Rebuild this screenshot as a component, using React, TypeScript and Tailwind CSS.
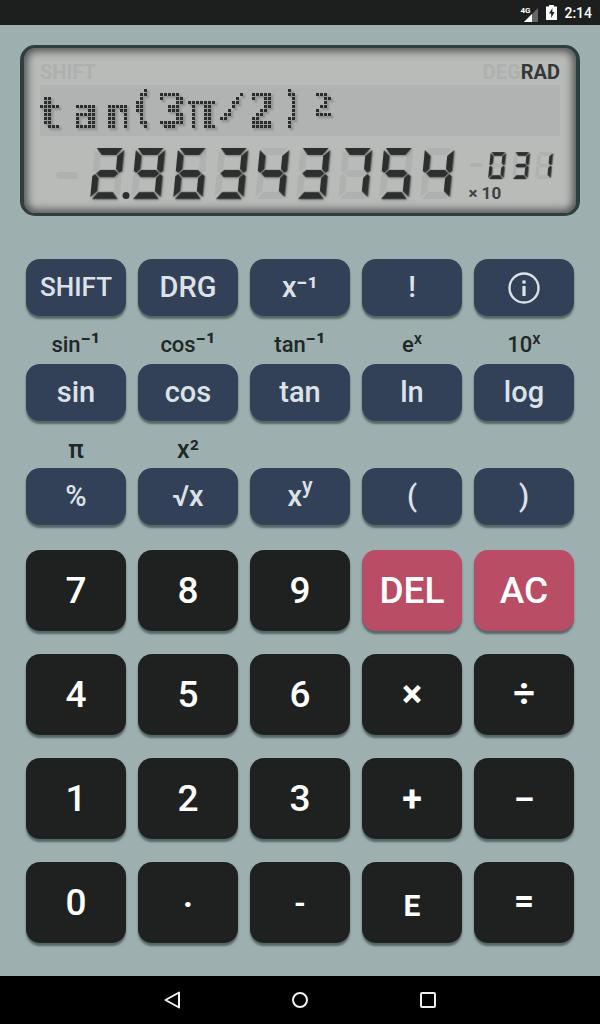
import { FC, ReactNode } from "react";

// seven segment shapes, unskewed, in a 32x51 box
const SEGMENTS: Record<string, string> = {
  a: "2,0 30,0 24,7 8,7",
  b: "32,2 32,23 29,25 25,21 25,8",
  c: "32,28 32,49 25,43 25,30 29,26",
  d: "8,44 24,44 30,51 2,51",
  e: "0,28 3,26 7,30 7,43 0,49",
  f: "0,2 7,8 7,21 3,25 0,23",
  g: "8,22 24,22 28,25.5 24,29 8,29 4,25.5",
};

const DIGITS: Record<string, string> = {
  "0": "abcdef",
  "1": "bc",
  "2": "abdeg",
  "3": "abcdg",
  "4": "bcfg",
  "5": "acdfg",
  "6": "acdefg",
  "7": "abc",
  "8": "abcdefg",
  "9": "abcdfg",
  " ": "",
};

// glyphs of the dot matrix line, each with its own slot and size
const EXPRESSION = [
  { c: "t", cls: "w-[20px] text-[44px] leading-[56px]" },
  { c: "a", cls: "w-[50px] text-[44px] leading-[56px]" },
  { c: "n", cls: "w-[16px] text-[44px] leading-[56px]" },
  { c: "(", cls: "w-[32px] text-[44px] leading-[44px]" },
  { c: "3", cls: "w-[28px] text-[48px] leading-[51px]" },
  { c: "π", cls: "w-[30px] text-[48px] leading-[51px]" },
  { c: "/", cls: "w-[34px] text-[30px] leading-[41px] scale-x-[1.6]" },
  { c: "2", cls: "w-[24px] text-[48px] leading-[51px]" },
  { c: ")", cls: "w-[36px] text-[44px] leading-[44px]" },
  { c: "2", cls: "w-[26px] text-[32px] leading-[40px]" },
];

const SegmentDigit: FC<{ value: string; small?: boolean; dot?: boolean }> = ({
  value,
  small,
  dot,
}) => {
  const lit = DIGITS[value];
  return (
    <svg
      viewBox="0 0 38 51"
      className={small ? "w-[20px] h-[27px] overflow-visible" : "w-[38px] h-[51px] overflow-visible"}
      aria-hidden="true"
    >
      <g transform="translate(5 0) skewX(-5.5) scale(0.92 1)">
        {Object.keys(SEGMENTS).map((k) => (
          <polygon key={k} points={SEGMENTS[k]} fill="#aeb1af" />
        ))}
        <g className="drop-shadow-[1.5px_1.5px_1px_rgba(0,0,0,0.3)]">
          {Object.keys(SEGMENTS)
            .filter((k) => lit.includes(k))
            .map((k) => (
              <polygon key={k} points={SEGMENTS[k]} fill="#2d2f2f" />
            ))}
        </g>
      </g>
      {dot && <circle cx="36" cy="47.5" r="3.5" fill="#2d2f2f" />}
    </svg>
  );
};

type KeyKind = "fn" | "num" | "del";

const KEY_COLORS: Record<KeyKind, string> = {
  fn: "h-[57px] bg-[#334158] text-[#dde2e8]",
  num: "h-[81px] bg-[#1f2120] text-white",
  del: "h-[81px] bg-[#b84d65] text-white",
};

const Key: FC<{ kind: KeyKind; children: ReactNode; text?: string }> = ({ kind, children, text }) => {
  const fallback = kind === "fn" ? "text-[29px] font-medium" : "text-[37px] font-medium";
  return (
    <div
      className={`${KEY_COLORS[kind]} ${text ?? fallback} flex items-center justify-center rounded-[14px] shadow-[0_3px_2px_rgba(55,75,75,0.7)]`}
    >
      {children}
    </div>
  );
};

const FnLabel: FC<{ children?: ReactNode; big?: boolean }> = ({ children, big }) => (
  <div className={`text-center font-medium text-[#1f2827] leading-[26px] ${big ? "text-[25px]" : "text-[22px]"}`}>
    {children}
  </div>
);

const InverseMark = () => <span className="text-[27px] leading-[0]">⁻¹</span>;

const Grid: FC<{ children: ReactNode; className?: string }> = ({ children, className }) => (
  <div className={`grid grid-cols-5 gap-x-3 ${className ?? ""}`}>{children}</div>
);

const InfoIcon = () => (
  <svg width="32" height="32" viewBox="0 0 32 32" fill="none">
    <circle cx="16" cy="16" r="14.5" stroke="#dde2e8" strokeWidth="2.4" />
    <rect x="14.4" y="14" width="3.2" height="10" fill="#dde2e8" />
    <rect x="14.4" y="8.4" width="3.2" height="3.2" fill="#dde2e8" />
  </svg>
);

const App: FC = () => {
  const mantissa = "296343754".split("");
  const exponent = ["0", "3", "1"];

  return (
    <div className="w-[600px] h-[1024px] flex flex-col bg-[#9dafae] font-['Roboto',sans-serif] overflow-hidden">
      {/* Status bar */}
      <div className="h-[25px] bg-[#1d1f1e] flex items-center justify-end pr-2 text-white">
        <div className="relative w-[20px] h-[20px] mr-[6px]">
          <svg width="20" height="20" viewBox="0 0 20 20">
            <polygon points="18,5 18,19 4,19" fill="#666" />
            <polygon points="12,11 12,19 4,19" fill="#fff" />
          </svg>
          <span className="absolute left-0 top-[4px] text-[8px] leading-[8px] font-bold">4G</span>
        </div>
        <svg width="11" height="15" viewBox="0 0 11 15" className="mr-[7px]">
          <path fillRule="evenodd" fill="#fff" d="M3 0h5v1.5h3V15H0V1.5h3zM6.5 3L3 8.5h2.2V13l3.3-6H6.3z" />
        </svg>
        <span className="text-[14px] font-medium leading-none">2:14</span>
      </div>

      {/* Main */}
      <div className="flex-1 flex flex-col">
        {/* LCD */}
        <div className="mt-5 mx-5 h-[171px] rounded-[15px] border-y-[3px] border-x-4 border-[#2f3e3f] bg-[#b9bbb9] shadow-[inset_0_0_8px_3px_rgba(30,30,30,0.7)] flex flex-col px-4 pt-[14px]">
          <div className="h-[22px] flex items-start justify-between text-[20px] font-bold leading-[20px] text-[#adb0ae]">
            <span>SHIFT</span>
            <span>
              DEG<span className="text-[#333838]">RAD</span>
            </span>
          </div>
          <div className="mt-px h-[51px] bg-[#b0b3b1] flex items-start">
            <svg className="w-0 h-0" aria-hidden="true">
              <filter id="dots" x="0" y="0" width="100%" height="100%" colorInterpolationFilters="sRGB">
                <feComponentTransfer in="SourceGraphic" result="hard">
                  <feFuncA type="discrete" tableValues="0 0 1 1" />
                </feComponentTransfer>
                <feFlood x="1" y="1" width="1" height="1" floodColor="#000" />
                <feComposite width="4" height="4" />
                <feTile result="tile" />
                <feComposite in="hard" in2="tile" operator="in" />
                <feMorphology operator="dilate" radius="1" result="dot" />
                <feGaussianBlur in="dot" stdDeviation="1" />
                <feOffset dx="1.5" dy="1.5" />
                <feComponentTransfer result="shade">
                  <feFuncA type="linear" slope="0.35" />
                </feComponentTransfer>
                <feMerge>
                  <feMergeNode in="shade" />
                  <feMergeNode in="dot" />
                </feMerge>
              </filter>
            </svg>
            <div className="flex items-start h-[51px] text-[#2b2d2d] font-['DejaVu_Sans_Mono',monospace] font-bold [filter:url(#dots)]">
              {EXPRESSION.map((g, i) => (
                <span key={i} className={`flex justify-center ${g.cls}`}>
                  {g.c}
                </span>
              ))}
            </div>
          </div>
          <div role="img" aria-label="-2.96343754 × 10^-31" className="mt-3 h-[51px] flex items-start">
            <div className="ml-4 mt-[24px] w-[22px] h-[7px] rounded-full bg-[#aeb1af]" />
            <div className="ml-3 flex gap-[3.3px]">
              {mantissa.map((d, i) => (
                <SegmentDigit key={i} value={d} dot={i === 0} />
              ))}
            </div>
            <div className="ml-[10px] flex flex-col">
              <div className="mt-[4px] flex items-start">
                <div className="ml-[2px] mt-[11px] w-[13px] h-[4px] rounded-full bg-[#aeb1af]" />
                <div className="ml-[5px] flex gap-[3.5px]">
                  {exponent.map((d, i) => (
                    <SegmentDigit key={i} value={d} small />
                  ))}
                </div>
              </div>
              <div className="mt-[4px] text-[17px] font-bold leading-[20px] text-[#3d4242]">× 10</div>
            </div>
          </div>
        </div>

        {/* Keypad */}
        <div className="mt-[43px] px-[26px] flex flex-col">
          <Grid>
            <Key kind="fn" text="text-[26px] font-medium">SHIFT</Key>
            <Key kind="fn">DRG</Key>
            <Key kind="fn">x⁻¹</Key>
            <Key kind="fn">!</Key>
            <Key kind="fn">
              <InfoIcon />
            </Key>
          </Grid>
          <Grid className="mt-[16px] h-[32px]">
            <FnLabel>
              sin
              <InverseMark />
            </FnLabel>
            <FnLabel>
              cos
              <InverseMark />
            </FnLabel>
            <FnLabel>
              tan
              <InverseMark />
            </FnLabel>
            <FnLabel>
              e<sup>x</sup>
            </FnLabel>
            <FnLabel>
              10<sup>x</sup>
            </FnLabel>
          </Grid>
          <Grid>
            <Key kind="fn">sin</Key>
            <Key kind="fn">cos</Key>
            <Key kind="fn">tan</Key>
            <Key kind="fn">ln</Key>
            <Key kind="fn">log</Key>
          </Grid>
          <Grid className="mt-[16px] h-[31px]">
            <FnLabel big>π</FnLabel>
            <FnLabel big>x²</FnLabel>
          </Grid>
          <Grid>
            <Key kind="fn">%</Key>
            <Key kind="fn">√x</Key>
            <Key kind="fn">
              x<sup>y</sup>
            </Key>
            <Key kind="fn">(</Key>
            <Key kind="fn">)</Key>
          </Grid>
          <Grid className="mt-[25px] gap-y-[23px]">
            <Key kind="num">7</Key>
            <Key kind="num">8</Key>
            <Key kind="num">9</Key>
            <Key kind="del">DEL</Key>
            <Key kind="del">AC</Key>
            <Key kind="num">4</Key>
            <Key kind="num">5</Key>
            <Key kind="num">6</Key>
            <Key kind="num" text="text-[38px] font-bold">×</Key>
            <Key kind="num" text="text-[38px] font-bold">÷</Key>
            <Key kind="num">1</Key>
            <Key kind="num">2</Key>
            <Key kind="num">3</Key>
            <Key kind="num" text="text-[36px] font-bold">+</Key>
            <Key kind="num" text="text-[32px] font-bold">–</Key>
            <Key kind="num">0</Key>
            <Key kind="num" text="text-[34px] font-bold pt-1">·</Key>
            <Key kind="num" text="text-[30px] font-bold">-</Key>
            <Key kind="num" text="text-[30px] font-bold pt-1.5">E</Key>
            <Key kind="num" text="text-[35px] font-bold">=</Key>
          </Grid>
        </div>
      </div>

      {/* Nav bar */}
      <div className="h-[48px] bg-black flex items-center justify-center">
        <div className="flex items-center gap-[112px]">
          <svg width="16" height="18" viewBox="0 0 16 18" fill="none">
            <path d="M15 1.5v15L1.5 9z" stroke="#f0f0f0" strokeWidth="2" strokeLinejoin="round" />
          </svg>
          <svg width="16" height="16" viewBox="0 0 16 16" fill="none">
            <circle cx="8" cy="8" r="7" stroke="#f0f0f0" strokeWidth="2" />
          </svg>
          <svg width="16" height="16" viewBox="0 0 16 16" fill="none">
            <rect x="1" y="1" width="14" height="14" rx="1" stroke="#f0f0f0" strokeWidth="2" />
          </svg>
        </div>
      </div>
    </div>
  );
};

export default App;
